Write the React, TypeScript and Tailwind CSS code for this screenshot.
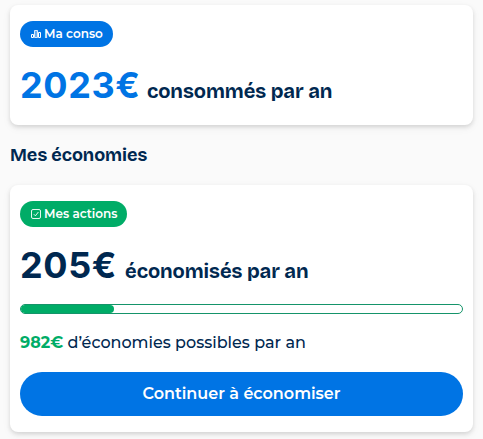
import type { ReactNode } from 'react'

function ChartIcon() {
  return (
    <svg className="h-3 w-3 shrink-0" viewBox="0 0 12 12" fill="none" stroke="currentColor" strokeWidth="1">
      <path d="M1.5 6.5h2v3h-2zM8.5 4.5h2v5h-2z" />
      <path d="M4.5 2.5h3v7h-3z" fill="currentColor" fillOpacity="0.4" strokeOpacity="0.8" />
    </svg>
  )
}

function CheckIcon() {
  return (
    <svg className="h-3 w-3 shrink-0" viewBox="0 0 12 12" fill="none" stroke="currentColor" strokeWidth="0.9">
      <rect x="1.5" y="1.5" width="9" height="9" rx="1.5" />
      <path d="M3.8 6.2l1.6 1.6 3-3.8" />
    </svg>
  )
}

function Badge({ icon, className, children }: { icon: ReactNode; className: string; children: ReactNode }) {
  return (
    <div className={`flex h-[26px] items-center gap-0.5 rounded-full pl-2.5 text-xs font-semibold text-white ${className}`}>
      {icon}
      <span className="whitespace-nowrap">{children}</span>
    </div>
  )
}

function Card({ className, children }: { className: string; children: ReactNode }) {
  return (
    <div className={`rounded-lg bg-white px-2.5 pt-4 shadow-[0_2px_4px_rgba(0,0,0,0.12),0_3px_10px_rgba(0,0,0,0.05)] ${className}`}>
      {children}
    </div>
  )
}

function Amount({ value, label, className }: { value: number; label: string; className: string }) {
  return (
    <div className="mt-4 flex h-[50px] items-baseline whitespace-nowrap font-bold">
      <span className={`font-['Inter',sans-serif] text-4xl leading-[44px] tracking-[0.6px] ${className}`}>{value}€</span>
      <span className="font-['Bricolage_Grotesque','Inter',sans-serif] text-xl leading-[44px] tracking-[-0.07px]">{label}</span>
    </div>
  )
}

export default function App() {
  const saved = 205
  const possible = 982
  const progress = (saved / possible) * 100

  return (
    <div className="h-[439px] overflow-hidden bg-[#fafafa] px-2.5 pt-[5px] font-['Montserrat','Inter',sans-serif] text-[#002850]">
      <Card className="h-[120px]">
        <Badge icon={<ChartIcon />} className="w-[93px] bg-[#0074e4]">Ma conso</Badge>
        <Amount value={2023} label="consommés par an" className="w-[127px] text-[#0074e4]" />
      </Card>

      <h2 className="mt-4 h-7 whitespace-nowrap font-['Bricolage_Grotesque','Inter',sans-serif] text-lg font-bold leading-7 tracking-[-0.04px]">Mes économies</h2>

      <Card className="mt-4 h-[247px]">
        <Badge icon={<CheckIcon />} className="w-[107px] bg-[#00ac67]">Mes actions</Badge>
        <Amount value={saved} label="économisés par an" className="w-[105px]" />
        <div className="mt-[11px] h-2.5 overflow-hidden rounded-full border border-[#15946a]">
          <div className="-ml-px h-full rounded-full bg-[#00ac67]" style={{ width: `calc(${progress}% + 2px)` }} />
        </div>
        <p className="mt-[17px] h-6 whitespace-nowrap text-base font-medium leading-6">
          <strong className="font-bold text-[#00ac67]">{possible}€</strong> d’économies possibles par an
        </p>
        <button className="mt-[17px] h-11 w-full rounded-full bg-[#0074e4] text-base font-semibold text-white">
          Continuer à économiser
        </button>
      </Card>
    </div>
  )
}
